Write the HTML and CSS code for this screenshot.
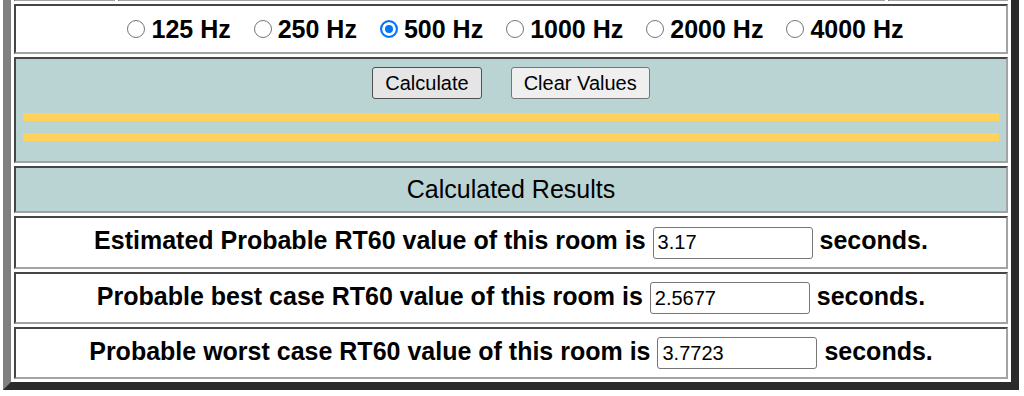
FILE: index.html
```html
<!DOCTYPE html>
<html lang="en">
<head>
    <meta charset="UTF-8">
    <meta name="viewport" content="width=device-width, initial-scale=1.0">
    <title>RT60 Calculator</title>
    <link rel="stylesheet" href="styles.css">
</head>
<body>
    <div class="viewport">
        <table class="calc-table">
            <!-- previous row (room dimensions), scrolled mostly out of view -->
            <tr class="prev-row">
                <td class="prev-a"></td>
                <td class="prev-b"></td>
                <td class="prev-c"></td>
            </tr>
            <tr>
                <td colspan="3" class="freq-cell">
                    <div class="freq-list">
                        <label class="freq"><input type="radio" name="freq" value="125"> 125 Hz</label>
                        <label class="freq"><input type="radio" name="freq" value="250"> 250 Hz</label>
                        <label class="freq"><input type="radio" name="freq" value="500" checked> 500 Hz</label>
                        <label class="freq"><input type="radio" name="freq" value="1000"> 1000 Hz</label>
                        <label class="freq"><input type="radio" name="freq" value="2000"> 2000 Hz</label>
                        <label class="freq"><input type="radio" name="freq" value="4000"> 4000 Hz</label>
                    </div>
                </td>
            </tr>
            <tr>
                <td colspan="3" class="teal-cell control-cell">
                    <div class="button-row">
                        <button class="calc-button calc-button-active">Calculate</button>
                        <button class="calc-button">Clear Values</button>
                    </div>
                    <div class="yellow-bar"></div>
                    <div class="yellow-bar yellow-bar-second"></div>
                </td>
            </tr>
            <tr>
                <td colspan="3" class="teal-cell results-title">Calculated Results</td>
            </tr>
            <tr>
                <td colspan="3" class="result-cell result-first">
                    Estimated Probable RT60 value of this room is <input type="text" class="result-input" value="3.17"> seconds.
                </td>
            </tr>
            <tr>
                <td colspan="3" class="result-cell">
                    Probable best case RT60 value of this room is <input type="text" class="result-input" value="2.5677"> seconds.
                </td>
            </tr>
            <tr>
                <td colspan="3" class="result-cell">
                    Probable worst case RT60 value of this room is <input type="text" class="result-input" value="3.7723"> seconds.
                </td>
            </tr>
        </table>
    </div>
</body>
</html>
```

FILE: styles.css
```css
body {
    margin: 0;
    background: white;
    font-family: "Liberation Sans", Arial, sans-serif;
    color: black;
}
.viewport {
    height: 396px;
    overflow: hidden;
}
.calc-table {
    width: 1016px;
    margin: -40px 0 0 3px;
    border-style: solid;
    border-width: 8px;
    border-color: #808080 #2b2b2b #2b2b2b #808080;
    border-spacing: 3px;
    table-layout: fixed;
}
.calc-table td {
    box-sizing: border-box;
    padding: 0;
    border-style: solid;
    border-width: 2px;
    border-color: #464646 #a3a3a3 #a3a3a3 #464646;
}
.prev-row td {
    height: 30px;
}
.prev-a {
    width: 101px;
}
.prev-c {
    width: 120px;
}
.freq-cell {
    height: 50px;
}
.freq-list {
    display: flex;
    justify-content: center;
    align-items: center;
    gap: 23px;
    padding-left: 9px;
}
.freq {
    display: flex;
    align-items: center;
    gap: 6px;
    font-size: 25px;
    font-weight: bold;
}
.freq input {
    appearance: none;
    width: 18px;
    height: 18px;
    margin: 0;
    border: 1px solid #767676;
    border-radius: 50%;
    background: white;
}
.freq input:checked {
    border: 2px solid #0075ff;
    background: #0075ff;
    box-shadow: inset 0 0 0 3px white;
}
.teal-cell {
    background: #bad4d4;
}
.control-cell {
    height: 106px;
    padding: 8px 7px 20px 7px !important;
    vertical-align: top;
}
.button-row {
    display: flex;
    justify-content: center;
    gap: 29px;
}
.calc-button {
    height: 32px;
    padding: 0 12px;
    font-family: "Liberation Sans", Arial, sans-serif;
    font-size: 20px;
    color: black;
    background: #efefef;
    border: 1px solid #767676;
    border-radius: 3px;
}
.calc-button-active {
    background: #e5e5e5;
    border-color: #4f4f4f;
}
.yellow-bar {
    height: 8px;
    margin-top: 14px;
    background: #fed25b;
}
.yellow-bar-second {
    margin-top: 12px;
}
.results-title {
    height: 47px;
    text-align: center;
    font-size: 25px;
}
.result-cell {
    height: 52px;
    text-align: center;
    font-size: 25px;
    font-weight: bold;
}
.result-first {
    height: 53px;
}
.result-input {
    box-sizing: border-box;
    width: 160px;
    height: 32px;
    padding: 0 4px;
    font-family: "Liberation Sans", Arial, sans-serif;
    font-size: 20px;
    font-weight: normal;
    color: black;
    border: 1px solid #767676;
    border-radius: 3px;
}
```
